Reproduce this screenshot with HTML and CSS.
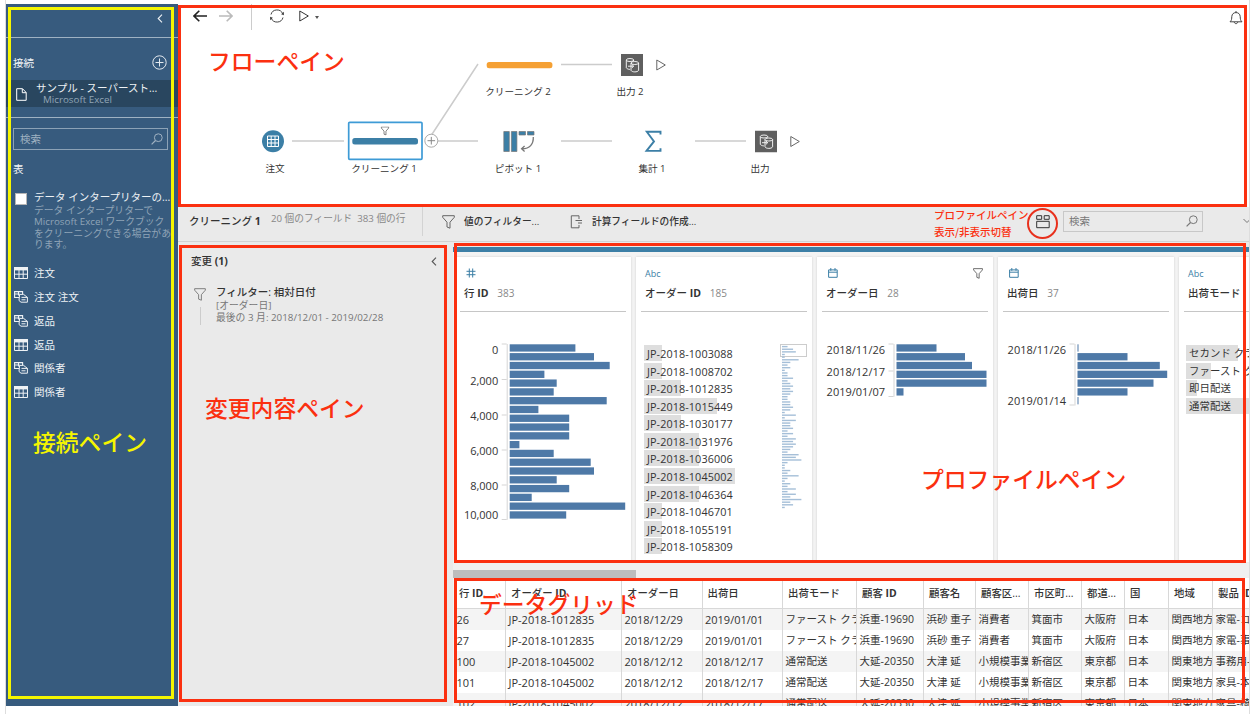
FILE: index.html
```html
<!DOCTYPE html>
<html lang="ja">
<head>
  <meta charset="UTF-8" />
  <meta name="viewport" content="width=device-width, initial-scale=1" />
  <title>フロー - クリーニング 1</title>
  <link rel="stylesheet" href="styles.css">
</head>
<body>

<!-- アイコン定義 -->
<svg class="defs" width="0" height="0">
  <symbol id="i-table" viewBox="0 0 14 12">
    <path d="M.5.5h13v11H.5z" fill="none" stroke="currentColor"/>
    <path d="M0 0h14v3.4H0z" fill="currentColor"/>
    <path d="M0 7.2h14M5 3v9M9.2 3v9" fill="none" stroke="currentColor"/>
  </symbol>
  <symbol id="i-named" viewBox="0 0 14 12">
    <path d="M5 6.5H.6V.6h8V3M.6 3h5M4.5.6v4" fill="none" stroke="currentColor" stroke-width="1.1"/>
    <path d="M5.6 3.4h4l3.8 3v4.8H7L5 9.5z M7.5 6.4h6M7.5 8.8h4" fill="none" stroke="currentColor"/>
  </symbol>
  <symbol id="i-funnel" viewBox="0 0 13 14">
    <path d="M.7.7h11.6v1.6L8 7.2v6L5 12V7.2L.7 2.3z" fill="none" stroke="currentColor"/>
  </symbol>
  <symbol id="i-search" viewBox="0 0 12 12">
    <circle cx="7.3" cy="4.7" r="3.9" fill="none" stroke="currentColor"/>
    <path d="M4.5 7.5.6 11.4" stroke="currentColor" stroke-width="1.2"/>
  </symbol>
  <symbol id="i-cal" viewBox="0 0 10 10">
    <path d="M.6 1.9h8.6v7.4H.6zM.6 4.2h8.6M2.8 0v2.8M7 0v2.8" fill="none" stroke="currentColor"/>
  </symbol>
  <symbol id="i-hash" viewBox="0 0 10 10">
    <path d="M3.3.5v9M6.7.5v9M.5 3.3h9M.5 6.7h9" fill="none" stroke="currentColor"/>
  </symbol>
  <symbol id="i-left" viewBox="0 0 6 9">
    <path d="M5 .7 1.2 4.5 5 8.3" fill="none" stroke="currentColor" stroke-width="1.1"/>
  </symbol>
  <symbol id="i-play" viewBox="0 0 10 12">
    <path d="M.8 1v10L9.3 6z" fill="none" stroke="currentColor"/>
  </symbol>
  <symbol id="i-output" viewBox="0 0 22 22">
    <path d="M0 0h22v22H0z" fill="#5f5f5f"/>
    <g fill="none" stroke="#fff" stroke-width=".9">
      <path d="M5.3 6.2v7.6c.5.9 1.8 1.5 3.6 1.6M12.6 7V6"/>
      <ellipse cx="9" cy="6" rx="3.7" ry="1.5"/>
      <ellipse cx="13.8" cy="9" rx="3.8" ry="1.5"/>
      <path d="M10 9v7.4c1 2 6.600 2 7.600 0V9M7 12.200h5.500M10.800 10.400l1.900 1.800-1.900 1.800"/>
    </g>
  </symbol>
</svg>

<div class="frame">
<div class="app">

  <!-- 接続ペイン -->
  <aside class="sidebar">
    <div class="side-top"><svg class="chev"><use href="#i-left"/></svg></div>
    <div class="side-head">
      <span>接続</span>
      <svg class="plus" viewBox="0 0 15 15"><circle cx="7.500" cy="7.500" r="6.700"/><path d="M3.500 7.500h8M7.500 3.500v8"/></svg>
    </div>
    <div class="conn">
      <svg class="doc" viewBox="0 0 11 13"><path d="M.7.7h5.800l3.700 3.800v7.800H.7zM6.300.9v3.800h3.800"/></svg>
      <div>
        <div class="conn-name">サンプル - スーパースト...</div>
        <div class="conn-type">Microsoft Excel</div>
      </div>
    </div>
    <div class="side-search"><span>検索</span><svg><use href="#i-search"/></svg></div>
    <div class="side-title">表</div>
    <div class="interp">
      <span class="check"></span>
      <div>
        <div class="interp-name">データ インタープリターの...</div>
        <p>データ インタープリターで<br>Microsoft Excel ワークブック<br>をクリーニングできる場合があ<br>ります。</p>
      </div>
    </div>
    <ul class="tables">
      <li><svg><use href="#i-table"/></svg>注文</li>
      <li><svg><use href="#i-named"/></svg>注文 注文</li>
      <li><svg><use href="#i-named"/></svg>返品</li>
      <li><svg><use href="#i-table"/></svg>返品</li>
      <li><svg><use href="#i-named"/></svg>関係者</li>
      <li><svg><use href="#i-table"/></svg>関係者</li>
    </ul>
  </aside>

  <main class="main">
    <!-- フローペイン -->
    <section class="flow">
      <div class="flow-bar">
        <svg class="arrow" viewBox="0 0 14 12"><path d="M14 6H1M6.300.7 1 6l5.300 5.300"/></svg>
        <svg class="arrow off" viewBox="0 0 14 12"><path d="M0 6h13M7.700.7 13 6l-5.300 5.300"/></svg>
        <span class="vline"></span>
        <svg class="refresh" viewBox="0 0 16 14"><path d="M2 5.500a6.200 6.200 0 0 1 11.800-.5M14 8.500a6.200 6.200 0 0 1-11.800.5"/><path class="tip" d="M14.900 2.800v3.400l-2.800-1zM1.100 11.200V7.800l2.800 1z"/></svg>
        <svg class="play"><use href="#i-play"/></svg>
        <span class="caret"></span>
        <svg class="bell" viewBox="0 0 14 16"><path d="M1 11.800c1.700-1.400 1.700-3 1.800-5.300C3 4 4.600 2.600 7 2.600S11 4 11.200 6.500c.1 2.300.1 3.900 1.800 5.300zM7 2.600V1M5.300 12c.2 2.200 3.200 2.200 3.400 0"/></svg>
      </div>
      <svg class="canvas" viewBox="178 31 1071 176">
        <g class="edge">
          <path d="M292 141h52M437 141h41M561 141h51M695 141h51M561 64.500h51M431.500 135 478 64"/>
        </g>
        <circle cx="273" cy="141.300" r="11" fill="#3c7fa6"/>
        <path d="M267.500 136h11v10.500h-11zM267.500 139.500h11M267.500 143h11M271.200 136v10.500M275 136v10.500" fill="none" stroke="#fff"/>
        <rect x="348.700" y="122.300" width="73.300" height="37" rx="1" fill="#fff" stroke="#3e9bd6" stroke-width="1.700"/>
        <rect x="352.300" y="138" width="65.700" height="6.500" rx="2.500" fill="#3c7fa6"/>
        <use href="#i-funnel" x="380.500" y="126.500" width="9" height="9" color="#444"/>
        <circle cx="431.300" cy="140.700" r="6.500" fill="#fff" stroke="#aaa"/>
        <path d="M427.500 140.700h7.600M431.300 136.900v7.600" stroke="#888"/>
        <rect x="486.700" y="62" width="65.700" height="6.200" rx="2.500" fill="#f5a033"/>
        <use href="#i-output" x="621" y="54" width="22" height="22"/>
        <use href="#i-play" x="656" y="59" width="10" height="12" color="#666"/>
        <g fill="#3c7fa6" stroke="#777" stroke-width=".7">
          <path d="M503.800 131.500h5.500v20h-5.500zM511.400 131.500h5.500v20h-5.500zM519 131.500h6.500v3.500H519zM527.500 131.500h6.500v3.500h-6.500z"/>
        </g>
        <path d="M533.300 137c.3 7-3.500 12-11.500 11.800M524.600 146l-3 2.800 3 2.600" fill="none" stroke="#777" stroke-width="1.300"/>
        <path d="M660.500 134.500v-2.700h-13.700l7.200 9.600-7.500 9.500h14v-2.700" fill="none" stroke="#3c7fa6" stroke-width="1.900"/>
        <use href="#i-output" x="755" y="130.500" width="22" height="22"/>
        <use href="#i-play" x="790" y="135.500" width="10" height="12" color="#666"/>
        <g class="node-label">
          <text x="275" y="171.500">注文</text>
          <text x="384" y="171.500">クリーニング 1</text>
          <text x="518" y="95">クリーニング 2</text>
          <text x="630" y="95">出力 2</text>
          <text x="518" y="171.500">ピボット 1</text>
          <text x="652" y="171.500">集計 1</text>
          <text x="760" y="171.500">出力</text>
        </g>
      </svg>
    </section>

    <!-- ステップのツールバー -->
    <div class="step-bar">
      <strong>クリーニング <b>1</b></strong>
      <span class="counts">20 個のフィールド&nbsp; 383 個の行</span>
      <span class="vline"></span>
      <span class="tool filter"><svg><use href="#i-funnel"/></svg>値のフィルター...</span>
      <span class="tool calc"><svg viewBox="0 0 12 14"><path d="M8.500 4V.8H.8v12h7.700V10M5 5.500h6.500M7.500 8h4"/></svg>計算フィールドの作成...</span>
      <svg class="views" viewBox="0 0 14 14"><path d="M.7.7h5v3.600h-5zM8.200.7h5v3.600h-5zM.7 6.300h12.500v6.400H.7z"/></svg>
      <div class="step-search"><span>検索</span><svg><use href="#i-search"/></svg></div>
      <svg class="more" viewBox="0 0 8 6"><path d="M.5 1 4 4.500 7.500 1"/></svg>
    </div>

    <div class="work">
      <!-- 変更内容ペイン -->
      <section class="changes">
        <div class="changes-head"><strong>変更 <b>(1)</b></strong><svg class="chev"><use href="#i-left"/></svg></div>
        <div class="change">
          <div class="change-icon"><svg><use href="#i-funnel"/></svg></div>
          <div>
            <div class="change-name">フィルター: 相対日付</div>
            <div class="change-info">[オーダー日]<br>最後の 3 月: 2018/12/01 - 2019/02/28</div>
          </div>
        </div>
      </section>

      <div class="data">
        <!-- プロファイルペイン -->
        <section class="profile">
          <article class="card">
            <header><svg class="type"><use href="#i-hash"/></svg><h3>行 <b>ID</b> <small>383</small></h3></header>
            <svg class="histogram" id="hist-row"></svg>
          </article>
          <article class="card">
            <header><span class="type">Abc</span><h3>オーダー <b>ID</b> <small>185</small></h3></header>
            <div class="values" id="order-values"></div>
            <svg class="minimap" id="minimap"></svg>
          </article>
          <article class="card">
            <header><svg class="type"><use href="#i-cal"/></svg><svg class="filtered"><use href="#i-funnel"/></svg><h3>オーダー日 <small>28</small></h3></header>
            <svg class="histogram" id="hist-order"></svg>
          </article>
          <article class="card">
            <header><svg class="type"><use href="#i-cal"/></svg><h3>出荷日 <small>37</small></h3></header>
            <svg class="histogram" id="hist-ship"></svg>
          </article>
          <article class="card">
            <header><span class="type">Abc</span><h3>出荷モード <small>4</small></h3></header>
            <div class="values" id="mode-values"></div>
          </article>
        </section>
        <div class="scroll"><div class="thumb"></div></div>
        <!-- データグリッド -->
        <section class="grid" id="grid">
          <div class="row head">
            <span>行 <b>ID</b></span><span>オーダー <b>ID</b></span><span>オーダー日</span><span>出荷日</span><span>出荷モード</span><span>顧客 <b>ID</b></span><span>顧客名</span><span>顧客区...</span><span>市区町...</span><span>都道...</span><span>国</span><span>地域</span><span>製品 <b>ID</b></span>
          </div>
        </section>
      </div>
    </div>
  </main>

  <!-- 注釈 -->
  <div class="box box-side"></div>
  <div class="box box-flow"></div>
  <div class="box box-changes"></div>
  <div class="box box-profile"></div>
  <div class="box box-grid"></div>
  <div class="ring"></div>
  <div class="note note-side">接続ペイン</div>
  <div class="note note-flow">フローペイン</div>
  <div class="note note-changes">変更内容ペイン</div>
  <div class="note note-profile">プロファイルペイン</div>
  <div class="note note-grid">データグリッド</div>
  <div class="note note-toggle">プロファイルペイン<br>表示/非表示切替</div>
</div>
</div>

<script>
  const PITCH = 8.79;

  function histogram(id, x, bars, labels, ticks) {
    const bottom = 4 + bars.length * PITCH;
    let out = `<path class="axis" d="M${x - 2.5} 4V${bottom}"/>`;
    ticks.forEach(y => out += `<path class="tick" d="M${x - 8} ${y}h5"/>`);
    bars.forEach((w, i) => {
      out += `<rect x="${x}" y="${4.3 + i * PITCH}" width="${w}" height="7.3"/>`;
    });
    labels.forEach(([y, t]) => out += `<text x="${x - 11.5}" y="${y + 4}">${t}</text>`);
    document.getElementById(id).innerHTML = out;
  }

  function values(id, items) {
    document.getElementById(id).innerHTML = items.map(([t, w]) =>
      `<div class="value"><i style="width:${w}px"></i><span>${t}</span></div>`).join("");
  }

  histogram("hist-row", 54.7,
    [65.7, 84.3, 100, 34.7, 47, 44, 97, 28.7, 59.5, 59.5, 59.5, 9.7, 44, 81, 84.3, 47, 59.5, 22, 115.5, 56.5],
    [[9.5, "0"], [40.5, "2,000"], [75.5, "4,000"], [110.5, "6,000"], [145.5, "8,000"], [174.5, "10,000"]],
    [4, 39.5, 75, 110, 145, 179.5]);
  histogram("hist-order", 79.5, [40, 68.5, 75.5, 90, 90, 7],
    [[9.5, "2018/11/26"], [31.5, "2018/12/17"], [52, "2019/01/07"]], [4, 31, 56.5]);
  histogram("hist-ship", 79.5, [1, 50, 82.3, 89.7, 76, 50, 1],
    [[9.5, "2018/11/26"], [60.5, "2019/01/14"]], [4, 65]);

  values("order-values", [
    ["JP-2018-1003088", 18], ["JP-2018-1008702", 18], ["JP-2018-1012835", 36.5], ["JP-2018-1015449", 73],
    ["JP-2018-1030177", 36.5], ["JP-2018-1031976", 54.5], ["JP-2018-1036006", 54.5], ["JP-2018-1045002", 91],
    ["JP-2018-1046364", 54.5], ["JP-2018-1046701", 18], ["JP-2018-1055191", 18], ["JP-2018-1058309", 18]
  ]);
  values("mode-values", [["セカンド クラス", 52], ["ファースト クラス", 24.5], ["即日配送", 11], ["通常配送", 91]]);

  const counts = "24511632312242343432233431515334242545432657211326213252537341";
  document.getElementById("minimap").innerHTML = '<rect class="view" x=".5" y=".5" width="26" height="12"/>' +
    [...counts].map((c, i) => `<rect x="2" y="${1.9 + i * 2.637}" width="${c * 2.77}" height="1.4"/>`).join("");

  const rows = [
    ["26", "JP-2018-1012835", "2018/12/29", "2019/01/01", "ファースト クラス", "浜重-19690", "浜砂 重子", "消費者", "箕面市", "大阪府", "日本", "関西地方", "家電-コピ"],
    ["27", "JP-2018-1012835", "2018/12/29", "2019/01/01", "ファースト クラス", "浜重-19690", "浜砂 重子", "消費者", "箕面市", "大阪府", "日本", "関西地方", "家電-事務"],
    ["100", "JP-2018-1045002", "2018/12/12", "2018/12/17", "通常配送", "大延-20350", "大津 延", "小規模事業所", "新宿区", "東京都", "日本", "関東地方", "事務用-"],
    ["101", "JP-2018-1045002", "2018/12/12", "2018/12/17", "通常配送", "大延-20350", "大津 延", "小規模事業所", "新宿区", "東京都", "日本", "関東地方", "家具-本棚"],
    ["102", "JP-2018-1045002", "2018/12/12", "2018/12/17", "通常配送", "大延-20350", "大津 延", "小規模事業所", "新宿区", "東京都", "日本", "関東地方", "家具-椅子"]
  ];
  // 英数字だけのセルは少し大きい文字
  const cell = c => `<span${/^[\w\/-]+$/.test(c) ? ' class="num"' : ""}>${c}</span>`;
  document.getElementById("grid").innerHTML += rows.map(r =>
    `<div class="row">${r.map(cell).join("")}</div>`).join("");
</script>
</body>
</html>
```
FILE: styles.css
```css
* {
  box-sizing: border-box;
}

body {
  margin: 0;
  background: #fff;
  font-family: "Open Sans", "Noto Sans CJK JP", sans-serif;
  font-size: 10.5px;
  line-height: 14px;
  color: #333;
  overflow: hidden;
}

svg {
  display: block;
  flex: none;
}

.defs {
  position: absolute;
}

.frame {
  height: 714px;
  margin: 0 9px 0 5px;
  padding-top: 4px;
  border-left: 1px solid #ddd;
  border-right: 1px solid #ddd;
}

.app {
  position: relative;
  display: grid;
  grid-template-columns: 172px minmax(0, 1fr);
  height: 702px;
  overflow: hidden;
  white-space: nowrap;
}

.chev {
  width: 6px;
  height: 9px;
}

/* 接続ペイン */
.sidebar {
  background: #375b7e;
  color: #eef2f5;
}

.side-top {
  display: flex;
  justify-content: flex-end;
  height: 34px;
  padding: 10px 15px 0 0;
  border-bottom: 1px solid #9fb2c3;
}

.side-head {
  display: flex;
  justify-content: space-between;
  align-items: center;
  height: 42px;
  padding: 7px 11px 0 7px;
}

.plus {
  width: 15px;
  height: 15px;
  fill: none;
  stroke: #e4eaef;
}

.conn {
  display: flex;
  height: 27px;
  padding-left: 10px;
  background: #29465f;
}

.doc {
  width: 11px;
  height: 13px;
  margin: 8px 9px 0 0;
  fill: none;
  stroke: #fff;
}

.conn-name {
  height: 14px;
  line-height: 16px;
}

.conn-type {
  padding-left: 7px;
  line-height: 12px;
  font-size: 9.8px;
  color: #91a5b6;
}

.side-search {
  display: flex;
  justify-content: space-between;
  align-items: center;
  height: 22px;
  margin: 21px 10px 0 7px;
  padding: 0 4px 0 6px;
  border: 1px solid #8ca2b6;
  color: #a0b2c2;
  position: relative;
}

/* 検索欄の上の区切り線 */
.side-search::before {
  content: "";
  position: absolute;
  left: -8px;
  right: -11px;
  top: -12px;
  height: 1px;
  background: #9fb2c3;
}

.side-search svg,
.step-search svg {
  width: 12px;
  height: 12px;
}

.side-title {
  margin: 12px 0 0 7px;
}

.interp {
  display: flex;
  margin-top: 14px;
  padding-left: 9px;
}

.check {
  flex: none;
  width: 12px;
  height: 12px;
  margin: 3px 7px 0 0;
  background: #fff;
  border: 1px solid #b5b5b5;
}

.interp-name {
  height: 15px;
}

.interp p {
  margin: 0;
  line-height: 11.4px;
  font-size: 9.8px;
  color: #8fa4b7;
}

.tables {
  list-style: none;
  margin: 11px 0 0;
  padding: 0 0 0 8px;
}

.tables li {
  display: flex;
  align-items: center;
  gap: 6px;
  height: 23.7px;
}

.tables svg {
  width: 14px;
  height: 12px;
}

/* フローペイン */
.main {
  display: flex;
  flex-direction: column;
  min-width: 0;
}

.flow {
  height: 203px;
}

.flow-bar {
  display: flex;
  align-items: center;
  height: 27px;
  padding: 0 6px 3px 15px;
}

.flow-bar svg {
  fill: none;
  stroke: #444;
}

.flow-bar .arrow {
  width: 14px;
  height: 12px;
  margin-right: 12px;
  stroke: #222;
  stroke-width: 1.6;
}

.flow-bar .off {
  margin-right: 18px;
  stroke: #bbb;
}

.vline {
  width: 1px;
  height: 27px;
  background: #ccc;
}

.refresh {
  width: 16px;
  height: 14px;
  margin: 0 14px 0 17px;
}

.refresh .tip {
  fill: #444;
  stroke: none;
}

.play {
  width: 10px;
  height: 12px;
}

.caret {
  margin: 3px auto 0 6px;
  border: 2px solid transparent;
  border-top: 3px solid #555;
  border-bottom: 0;
}

.bell {
  width: 14px;
  height: 16px;
  margin-top: 3px;
}

.canvas {
  width: 1071px;
  height: 176px;
}

.edge path {
  fill: none;
  stroke: #ccc;
  stroke-width: 1.5;
}

.node-label text {
  font-size: 9.6px;
  text-anchor: middle;
  fill: #333;
}

/* ステップのツールバー */
.step-bar {
  display: flex;
  align-items: center;
  height: 35px;
  padding-left: 11px;
  padding-bottom: 6px;
  background: #eaeaea;
  border-bottom: 1px solid #d2d2d2;
}

.step-bar strong {
  width: 82px;
  font-weight: 500;
}

.step-bar .counts {
  width: 151px;
  padding-bottom: 4px;
  font-size: 9.7px;
  color: #888;
}

.step-bar .vline {
  height: 29px;
  background: #d3d3d3;
}

.tool {
  display: flex;
  align-items: center;
  gap: 9px;
  padding-top: 1px;
  font-size: 9.7px;
  font-weight: 500;
}

.tool.filter {
  width: 147px;
  padding-left: 19px;
}

.tool svg {
  width: 13px;
  height: 14px;
  color: #666;
  fill: none;
  stroke: #666;
}

.tool.filter svg {
  stroke: none;
}

.views {
  width: 14px;
  height: 14px;
  margin: 2px 13px 0 auto;
  fill: none;
  stroke: #333;
}

.step-search {
  display: flex;
  align-items: center;
  justify-content: space-between;
  width: 140px;
  height: 21px;
  padding: 0 4px 0 5px;
  border: 1px solid #c8c8c8;
  color: #777;
}

.more {
  width: 8px;
  height: 6px;
  margin: 0 -2px 0 40px;
  fill: none;
  stroke: #777;
}

/* 変更内容ペイン */
.work {
  flex: 1;
  display: grid;
  grid-template-columns: 268px minmax(0, 1fr);
  gap: 7px;
  padding-top: 4px;
  background: #eaeaea;
  min-height: 0;
}

.changes-head {
  display: flex;
  justify-content: space-between;
  align-items: center;
  padding: 8px 9px 0 13px;
}

.changes-head strong {
  font-weight: 500;
}

.changes-head .chev {
  color: #555;
}

.change {
  display: flex;
  margin: 16px 0 0 16px;
}

.change-icon {
  width: 22px;
  padding-top: 4px;
  color: #777;
}

.change-icon svg {
  width: 12px;
  height: 13px;
}

.change-icon::after {
  content: "";
  display: block;
  width: 1px;
  height: 18px;
  margin: 6px 0 0 6px;
  background: #ccc;
}

.change-name {
  font-weight: 500;
  height: 16px;
  line-height: 16px;
}

.change-info {
  font-size: 9.8px;
  line-height: 11.5px;
  color: #777;
}

/* プロファイルペイン */
.data {
  display: flex;
  flex-direction: column;
  min-width: 0;
  margin-top: 1px;
  background: #f3f3f3;
}

.profile {
  display: flex;
  gap: 5px;
  height: 315px;
  padding: 5px 0 0 2px;
  border-top: 5px solid #3c7fa6;
  overflow: hidden;
}

.card {
  flex: none;
  position: relative;
  width: 176px;
  background: #fff;
  box-shadow: 0 0 2px #ccc;
}

.card header {
  display: grid;
  grid-template-columns: 1fr auto;
  grid-template-rows: 19px 34px;
  height: 55px;
  margin: 0 5px;
  padding: 0 4px;
  border-bottom: 1px solid #c6c6c6;
}

.type {
  align-self: end;
  font-size: 9px;
  line-height: 10px;
  color: #3c7fa6;
}

svg.type {
  width: 10px;
  height: 10px;
  margin: 0 0 -2px 2px;
}

span.type {
  margin-bottom: -3px;
}

.filtered {
  width: 10px;
  height: 11px;
  margin: 11px 1px 0 0;
  color: #444;
}

.card h3 {
  grid-column: 1 / 3;
  align-self: center;
  margin: 0;
  font-size: 10.5px;
  font-weight: 500;
}

.card small {
  margin-left: 6px;
  font-size: 10px;
  font-weight: 400;
  color: #888;
}

.histogram {
  width: 176px;
  height: 200px;
  margin-top: 28px;
}

.histogram rect {
  fill: #4e79a7;
}

.histogram text {
  font-size: 11px;
  text-anchor: end;
  fill: #333;
}

.axis,
.tick {
  stroke: #d5d5d5;
}

.values {
  margin: 33px 0 0 8px;
  width: 168px;
}

.value {
  position: relative;
  height: 17.57px;
  font-size: 10.8px;
  line-height: 17.5px;
}

.value i {
  position: absolute;
  left: 0;
  top: 0;
  height: 16px;
  background: #dedede;
}

.value span {
  position: relative;
  padding-left: 3px;
  letter-spacing: .1px;
}

#mode-values {
  margin-left: 7px;
}

#mode-values .value {
  font-size: 10.4px;
}

/* 値一覧の縮小表示 */
.minimap {
  position: absolute;
  left: 144px;
  top: 87px;
  width: 27px;
  height: 166px;
}

.minimap rect {
  fill: #a5bfd8;
}

.minimap .view {
  fill: none;
  stroke: #ccc;
}

.scroll {
  height: 16px;
  padding-top: 8px;
  background: #f0f0f0;
}

.thumb {
  width: 183px;
  height: 8px;
  background: #bdbdbd;
}

/* データグリッド */
.grid {
  flex: 1;
  min-height: 0;
  overflow: hidden;
  padding-left: 1px;
}

.row {
  display: grid;
  grid-template-columns: 52px 116px 80.5px 80.5px 74px 67px 52px 53px 53px 43px 44px 44px 60px;
  height: 21.1px;
  line-height: 21px;
  background: #fff;
}

.row span {
  padding-left: 2.5px;
  border-right: 1px solid #d8d8d8;
  overflow: hidden;
  font-size: 10.5px;
}

.row .num {
  font-size: 11px;
}

.row:nth-child(even) {
  background: #f4f4f4;
}

.row.head {
  height: 30.5px;
  line-height: 31px;
  border-bottom: 1px solid #d8d8d8;
}

.row.head span {
  padding-left: 5px;
  font-size: 10.4px;
  font-weight: 500;
}

/* 注釈 */
.box,
.ring,
.note {
  position: absolute;
}

.box {
  border: 3px solid #fb3010;
}

.box-side {
  left: 2px;
  top: 3px;
  width: 166px;
  height: 692px;
  border-color: #f5f500;
}

.box-flow {
  left: 172px;
  top: 1px;
  width: 1069px;
  height: 202px;
}

.box-changes {
  left: 173px;
  top: 241px;
  width: 268px;
  height: 457px;
}

.box-profile {
  left: 448px;
  top: 239px;
  width: 792px;
  height: 320px;
}

.box-grid {
  left: 448px;
  top: 574px;
  width: 791px;
  height: 125px;
}

.ring {
  left: 1021px;
  top: 204px;
  width: 31px;
  height: 31px;
  border: 2.5px solid #e8301c;
  border-radius: 50%;
}

.note {
  font-family: "Noto Sans CJK JP", sans-serif;
  font-size: 22.8px;
  line-height: 30px;
  font-weight: 500;
  color: #fb3010;
}

.note-side {
  left: 27px;
  top: 423px;
  color: #f5f500;
}

.note-flow {
  left: 202px;
  top: 42px;
}

.note-changes {
  left: 199px;
  top: 389px;
}

.note-profile {
  left: 915px;
  top: 460px;
}

.note-grid {
  left: 473px;
  top: 585px;
}

.note-toggle {
  left: 928px;
  top: 203px;
  font-size: 10.5px;
  line-height: 16.5px;
  font-weight: 500;
}
```
